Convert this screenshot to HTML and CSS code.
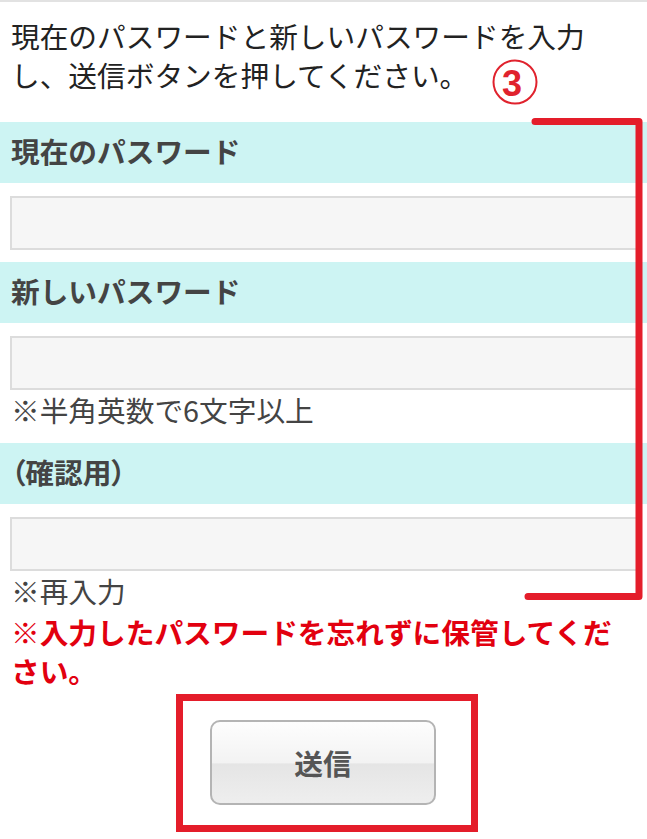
FILE: index.html
```html
<!DOCTYPE html>
<html lang="ja">
<head>
    <meta charset="UTF-8">
    <meta name="viewport" content="width=device-width, initial-scale=1.0">
    <title>パスワード変更</title>
    <link rel="stylesheet" href="styles.css">
</head>

<body>
    <div class="page">
        <p class="intro">現在のパスワードと新しいパスワードを入力し、送信ボタンを押してください。</p>

        <form class="pw-form" onsubmit="event.preventDefault();" autocomplete="off">
            <div class="field">
                <label class="field-label" for="currentPw">現在のパスワード</label>
                <input type="password" class="field-input" id="currentPw" name="currentPw">
            </div>
            <div class="field">
                <label class="field-label" for="newPw">新しいパスワード</label>
                <input type="password" class="field-input" id="newPw" name="newPw">
                <p class="note">※半角英数で6文字以上</p>
            </div>
            <div class="field last">
                <label class="field-label tight" for="confirmPw">（確認用）</label>
                <input type="password" class="field-input" id="confirmPw" name="confirmPw">
                <p class="note">※再入力</p>
            </div>

            <p class="warning">※入力したパスワードを忘れずに保管してください。</p>

            <div class="submit-mark">
                <button type="submit" class="submit-btn">送信</button>
            </div>
        </form>

        <!-- annotation marks drawn over the page -->
        <svg class="annotation" width="647" height="839" viewBox="0 0 647 839">
            <circle cx="515" cy="82" r="21.5" fill="none" stroke="#e0222d" stroke-width="2"/>
            <text x="512" y="96" text-anchor="middle" class="anno-num">3</text>
            <path d="M535 121.5 H639 V596.5 H528" fill="none" stroke="#e41d2a" stroke-width="7" stroke-linecap="round" stroke-linejoin="round"/>
        </svg>
    </div>
</body>
</html>
```

FILE: styles.css
```css
body {
    margin: 0;
    background: #fff;
    font-family: "Noto Sans CJK JP", "Noto Sans", sans-serif;
    font-size: 28.7px;
    color: #222;
}

.page {
    position: relative;
    width: 647px;
    height: 839px;
    overflow: hidden;
    border-top: 2px solid #e2e2e2;
    box-sizing: border-box;
}

.intro {
    margin: 0;
    padding: 14px 11px 0;
    line-height: 39px;
}

.pw-form {
    margin-top: 28px;
}

.field {
    margin-bottom: 12px;
}

.field.last {
    margin-bottom: 0;
}

.field-label {
    display: block;
    height: 61px;
    line-height: 58px;
    padding: 0 11px;
    background-color: #cdf4f3;
    color: #444;
    font-weight: bold;
}

.field-label.tight {
    font-feature-settings: "palt";
}

.field-input {
    display: block;
    width: calc(100% - 17px);
    height: 54px;
    margin: 13px 7px 0 10px;
    box-sizing: border-box;
    border: 2px solid #dcdcdc;
    background-color: #f6f6f6;
}

.note {
    margin: 0;
    padding: 0 11px 2px;
    line-height: 39px;
    color: #444;
}

.warning {
    margin: 0;
    padding: 0 11px;
    line-height: 39px;
    color: #e2000f;
    font-weight: bold;
}

.submit-mark {
    width: 302px;
    margin: 4px 0 0 176px;
    padding: 19px 34px 20px 27px;
    box-sizing: border-box;
    border: 7px solid #e41d2a;
}

.submit-btn {
    display: block;
    width: 226px;
    height: 85px;
    border: 2px solid #b4b4b4;
    border-radius: 10px;
    background: linear-gradient(#fdfdfd, #f3f3f3 50%, #e5e5e5 52%, #eeeeee);
    font-family: inherit;
    font-size: 28.7px;
    font-weight: bold;
    color: #555;
    cursor: pointer;
}

.annotation {
    position: absolute;
    top: -2px;
    left: 0;
    pointer-events: none;
}

.anno-num {
    font-family: "Liberation Sans", sans-serif;
    font-size: 36px;
    font-weight: bold;
    fill: #e0222d;
}
```
